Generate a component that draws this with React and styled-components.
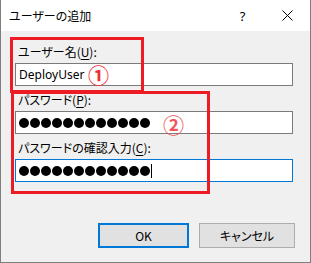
import React from "react";
import styled, { createGlobalStyle } from "styled-components";

const Global = createGlobalStyle`
  html, body { margin: 0; padding: 0; background: #ffffff; }
  body { font-family: "Noto Sans", "Noto Sans CJK JP", sans-serif; }
`;

const Window = styled.div`
  position: relative;
  box-sizing: border-box;
  width: 311px;
  height: 263px;
  display: flex;
  flex-direction: column;
  border: 1px solid #7f7f7f;
  border-top: none;
  background: #f0f0f0;
  overflow: hidden;
`;

const TitleBar = styled.div`
  height: 31px;
  flex: none;
  display: flex;
  align-items: center;
  background: #ffffff;
`;

const Title = styled.div`
  flex: 1;
  padding-left: 8px;
  padding-bottom: 1px;
  font-family: "Noto Sans CJK JP", sans-serif;
  font-feature-settings: "palt";
  font-size: 12px;
  color: #000;
`;

const CaptionButton = styled.div`
  width: 45px;
  height: 31px;
  display: flex;
  align-items: center;
  justify-content: center;
  font-family: "Noto Sans", sans-serif;
  font-size: 13px;
  color: #000;
`;

const Body = styled.div`
  flex: 1;
  display: flex;
  flex-direction: column;
  padding: 13px 17px 0 14px;
`;

const Fields = styled.div`
  display: flex;
  flex-direction: column;
  gap: 6px;
`;

const Field = styled.div`
  display: flex;
  flex-direction: column;
  gap: 3px;
`;

const Label = styled.div`
  height: 16px;
  line-height: 16px;
  padding-left: 3px;
  font-family: "Noto Sans CJK JP", sans-serif;
  font-feature-settings: "palt";
  font-size: 12px;
  color: #000;
  u { text-decoration: underline; text-underline-offset: 2px; }
`;

const Input = styled.div`
  box-sizing: border-box;
  height: 23px;
  display: flex;
  align-items: center;
  padding-left: 3px;
  background: #ffffff;
  border: 1px solid ${(p) => (p.$focused ? "#0078d7" : "#7a7a7a")};
  font-family: "Noto Sans", sans-serif;
  font-size: 12px;
  color: #000;
`;

const Dots = styled.div`
  display: flex;
  gap: 1px;
  align-items: center;
`;

const Dot = styled.span`
  width: 10px;
  height: 10px;
  border-radius: 50%;
  background: #000;
`;

const Caret = styled.span`
  width: 1px;
  height: 14px;
  background: #000;
`;

const Footer = styled.div`
  margin-top: auto;
  margin-right: -2px;
  padding-bottom: 14px;
  display: flex;
  justify-content: flex-end;
  gap: 10px;
`;

const Button = styled.div`
  box-sizing: border-box;
  width: ${(p) => p.$w}px;
  height: 25px;
  display: flex;
  align-items: center;
  justify-content: center;
  background: #e1e1e1;
  border: ${(p) => (p.$default ? "2px solid #0078d7" : "1px solid #adadad")};
  font-family: "Noto Sans CJK JP", sans-serif;
  font-feature-settings: "palt";
  font-size: 12px;
  color: #000;
`;

const RedBox = styled.div`
  position: absolute;
  box-sizing: border-box;
  border: 3px solid #ed1c24;
  pointer-events: none;
`;

const Marker = styled.div`
  position: absolute;
  font-family: "Noto Sans CJK JP", sans-serif;
  font-size: 21px;
  line-height: 20px;
  height: 20px;
  font-weight: 700;
  color: ${(p) => p.$color};
`;

const CloseIcon = () => (
  <svg width="11" height="11" viewBox="0 0 11 11">
    <path d="M0.5 0.5 L10.5 10.5 M10.5 0.5 L0.5 10.5" stroke="#000" strokeWidth="1" fill="none" />
  </svg>
);

const Password = ({ count, caret }) => (
  <Dots>
    {Array.from({ length: count }).map((_, i) => (
      <Dot key={i} />
    ))}
    {caret && <Caret />}
  </Dots>
);

export default function App() {
  return (
    <>
      <Global />
      <Window>
        <TitleBar>
          <Title>ユーザーの追加</Title>
          <CaptionButton>?</CaptionButton>
          <CaptionButton>
            <CloseIcon />
          </CaptionButton>
        </TitleBar>
        <Body>
          <Fields>
            <Field>
              <Label>
                ユーザー名(<u>U</u>):
              </Label>
              <Input>DeployUser</Input>
            </Field>
            <Field>
              <Label>
                パスワード(<u>P</u>):
              </Label>
              <Input>
                <Password count={12} />
              </Input>
            </Field>
            <Field>
              <Label>
                パスワードの確認入力(<u>C</u>):
              </Label>
              <Input $focused>
                <Password count={12} caret />
              </Input>
            </Field>
          </Fields>
          <Footer>
            <Button $w={91} $default>
              OK
            </Button>
            <Button $w={96}>キャンセル</Button>
          </Footer>
        </Body>
        <RedBox style={{ left: 9, top: 37, width: 134, height: 56 }} />
        <RedBox style={{ left: 10, top: 91, width: 199, height: 103 }} />
        <Marker $color="#ec2f36" style={{ left: 87, top: 64 }}>①</Marker>
        <Marker $color="#f0555b" style={{ left: 162, top: 114 }}>②</Marker>
      </Window>
    </>
  );
}
